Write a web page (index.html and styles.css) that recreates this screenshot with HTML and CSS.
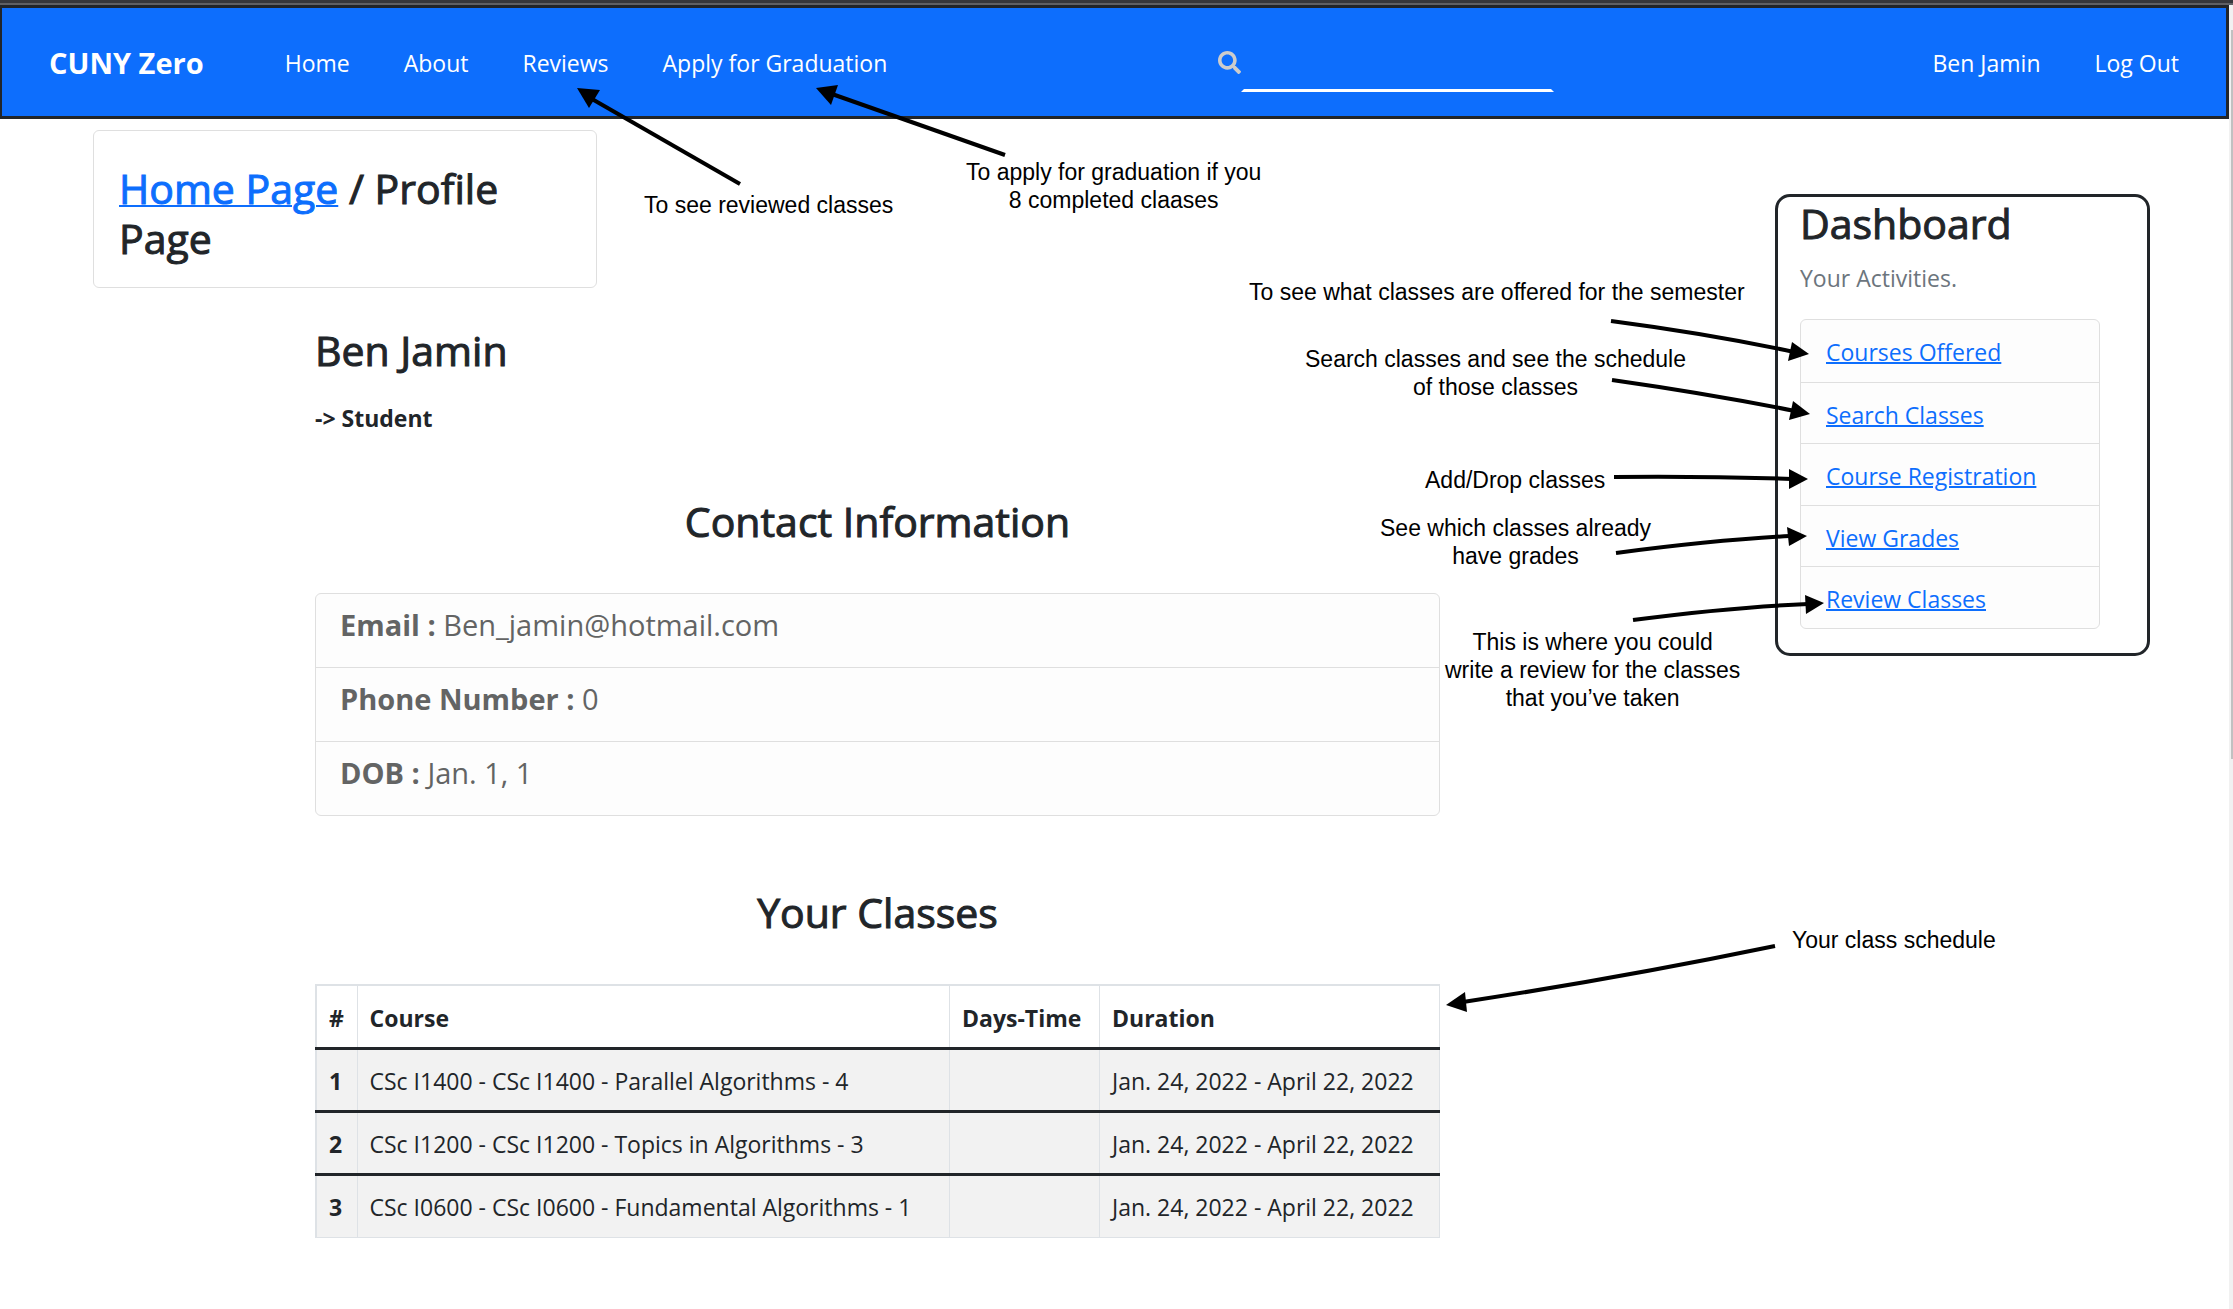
FILE: index.html
```html
<!DOCTYPE html>
<html lang="en">
<head>
  <meta charset="utf-8">
  <meta name="viewport" content="width=device-width, initial-scale=1">
  <title>CUNY Zero - Profile Page</title>
  <link rel="stylesheet" href="styles.css">
</head>
<body>
  <div class="window-edge"></div>
  <div class="viewport">
    <div class="page">
      <header class="navbar">
        <a class="brand" href="#">CUNY Zero</a>
        <nav class="nav-links" aria-label="Main">
          <a href="#">Home</a>
          <a href="#">About</a>
          <a href="#">Reviews</a>
          <a href="#">Apply for Graduation</a>
        </nav>
        <form class="search" role="search">
          <label for="q" aria-label="Search">
            <svg class="search-icon" viewBox="0 0 512 512" aria-hidden="true"><path d="M505 442.700L405.300 343c-4.500-4.500-10.600-7-17-7H372c27.600-35.300 44-79.700 44-128C416 93.100 322.900 0 208 0S0 93.100 0 208s93.100 208 208 208c48.300 0 92.700-16.400 128-44v16.300c0 6.400 2.500 12.500 7 17l99.700 99.700c9.400 9.400 24.600 9.400 33.900 0l28.300-28.300c9.400-9.400 9.400-24.600.1-34zM208 336c-70.700 0-128-57.200-128-128 0-70.700 57.200-128 128-128 70.700 0 128 57.200 128 128 0 70.700-57.200 128-128 128z"/></svg>
          </label>
          <input id="q" type="text" name="q">
        </form>
        <nav class="nav-links nav-account" aria-label="Account">
          <a href="#">Ben Jamin</a>
          <a href="#">Log Out</a>
        </nav>
      </header>

      <main class="layout">
        <div class="breadcrumb">
          <h2><a href="#">Home Page</a> / Profile Page</h2>
        </div>

        <section class="profile">
          <h2>Ben Jamin</h2>
          <p class="role">-&gt; Student</p>

          <h2 class="section-title">Contact Information</h2>
          <ul class="contact">
            <li><b>Email :</b> Ben_jamin@hotmail.com</li>
            <li><b>Phone Number :</b> 0</li>
            <li><b>DOB :</b> Jan. 1, 1</li>
          </ul>

          <h2 class="section-title classes-title">Your Classes</h2>
          <table class="classes">
            <colgroup><col class="col-num"><col><col class="col-days"><col class="col-duration"></colgroup>
            <thead>
              <tr><th scope="col">#</th><th scope="col">Course</th><th scope="col">Days-Time</th><th scope="col">Duration</th></tr>
            </thead>
            <tbody>
              <tr><th scope="row">1</th><td>CSc I1400 - CSc I1400 - Parallel Algorithms - 4</td><td></td><td>Jan. 24, 2022 - April 22, 2022</td></tr>
              <tr><th scope="row">2</th><td>CSc I1200 - CSc I1200 - Topics in Algorithms - 3</td><td></td><td>Jan. 24, 2022 - April 22, 2022</td></tr>
              <tr><th scope="row">3</th><td>CSc I0600 - CSc I0600 - Fundamental Algorithms - 1</td><td></td><td>Jan. 24, 2022 - April 22, 2022</td></tr>
            </tbody>
          </table>
        </section>

        <aside class="dashboard">
          <h2>Dashboard</h2>
          <p>Your Activities.</p>
          <ul class="activities">
            <li><a href="#">Courses Offered</a></li>
            <li><a href="#">Search Classes</a></li>
            <li><a href="#">Course Registration</a></li>
            <li><a href="#">View Grades</a></li>
            <li><a href="#">Review Classes</a></li>
          </ul>
        </aside>
      </main>
    </div>
    <div class="scrollbar" aria-hidden="true"><div class="scroll-thumb"></div></div>
  </div>

  <!-- Notes and arrows drawn over the page -->
  <div class="notes">
    <svg class="arrows" aria-hidden="true">
      <g class="shafts">
        <path d="M740 184L592 99"/>
        <path d="M1005 155L832 94"/>
        <path d="M1611 321Q1710 334 1794 352"/>
        <path d="M1612 380Q1710 394 1795 411"/>
        <path d="M1614 477Q1702 476 1792 479"/>
        <path d="M1616 553Q1714 540 1790 536"/>
        <path d="M1633 620Q1732 607 1808 604"/>
        <path d="M1775 946Q1620 978 1463 1002"/>
      </g>
      <g class="heads">
        <path d="M577 88L600 90L589 108Z"/>
        <path d="M816 88L838 85L831 105Z"/>
        <path d="M1809 354L1792 342L1788 361Z"/>
        <path d="M1810 414L1793 401L1789 420Z"/>
        <path d="M1808 479L1789 469V489Z"/>
        <path d="M1807 536L1787 527L1789 546Z"/>
        <path d="M1824 603L1805 595L1806 614Z"/>
        <path d="M1446 1005L1465 992L1467 1012Z"/>
      </g>
    </svg>
    <p class="note note-reviews">To see reviewed classes</p>
    <p class="note note-graduation">To apply for graduation if you<br>8 completed claases</p>
    <p class="note note-offered">To see what classes are offered for the semester</p>
    <p class="note note-search">Search classes and see the schedule<br>of those classes</p>
    <p class="note note-register">Add/Drop classes</p>
    <p class="note note-grades">See which classes already<br>have grades</p>
    <p class="note note-write">This is where you could<br>write a review for the classes<br>that you’ve taken</p>
    <p class="note note-schedule">Your class schedule</p>
  </div>
</body>
</html>
```
FILE: styles.css
```css
* {
  box-sizing: border-box;
}

body {
  position: relative;
  display: flex;
  flex-direction: column;
  min-height: 100vh;
  margin: 0;
  background: #fff;
  color: #212529;
  font: 400 23px/36px "Open Sans", "Noto Sans", sans-serif;
}

h2 {
  margin: 0;
  font-size: 41px;
  font-weight: 500;
  line-height: 50px;
  -webkit-text-stroke: 1px currentColor;
}

p,
ul {
  margin: 0;
  padding: 0;
}

ul {
  list-style: none;
}

a {
  color: #0d6efd;
  text-decoration-thickness: 2px;
}

.window-edge {
  height: 5px;
  background: #36373b;
  border-bottom: 2px solid #5f6064;
}

.viewport {
  display: flex;
  flex: 1;
}

.page {
  flex: 1;
  min-width: 0;
}

.scrollbar {
  width: 4px;
  padding: 25px 0 0 2px;
  background: #f1f1f1;
}

.scroll-thumb {
  height: 57%;
  background: #c1c1c1;
}

/* Navigation bar */
.navbar {
  display: flex;
  align-items: center;
  padding: 24px 47px;
  background: #0d6efd;
  border: 3px solid #212529;
  border-left-width: 2px;
}

.navbar a {
  padding-top: 2px;
  color: #fff;
  text-decoration: none;
  white-space: nowrap;
}

.navbar .brand {
  font-size: 29px;
  font-weight: 700;
}

.nav-links {
  display: flex;
  gap: 54px;
  margin-left: 81px;
}

.nav-account {
  margin-left: auto;
}

.search {
  display: flex;
  align-items: center;
  margin-left: calc(15vw - 4px);
}

.search label {
  display: flex;
}

.search-icon {
  width: 23px;
  height: 23px;
  fill: #ccc;
}

.search input {
  width: 313px;
  height: 60px;
  padding: 0 12px;
  border: 3px solid transparent;
  border-bottom-color: #fff;
  background: none;
  color: #fff;
  font: inherit;
  outline: none;
}

/* Page columns: margin, profile, gap, dashboard, margin */
.layout {
  display: grid;
  grid-template-columns: 222fr 1125fr 335fr 375fr 79fr;
  grid-template-rows: auto 1fr;
  padding: 11px 0 72px 93px;
}

.breadcrumb {
  grid-column: 1 / 3;
  grid-row: 1;
  max-width: 504px;
  padding: 32px 25px 24px;
  border: 1px solid #dfdfdf;
  border-radius: 6px;
}

.breadcrumb a {
  display: inline-block;
}

.profile {
  grid-column: 2;
  grid-row: 2;
  padding-top: 37px;
}

.role {
  margin: 25px 0 60px;
  font-weight: 700;
}

.section-title {
  margin-bottom: 47px;
  text-align: center;
}

.classes-title {
  margin-top: 71px;
}

.contact,
.activities {
  border: 1px solid #dfdfdf;
  border-radius: 6px;
  background: #fdfdfd;
}

.contact li {
  padding: 13px 24px 24px;
  color: #636464;
  font-size: 29px;
  font-weight: 500;
}

.contact li + li,
.activities li + li {
  border-top: 1px solid #dfdfdf;
}

/* Class schedule */
.classes {
  width: 100%;
  border-collapse: collapse;
  table-layout: fixed;
}

.col-num {
  width: 41px;
}

.col-days {
  width: 150px;
}

.col-duration {
  width: 340px;
}

.classes th,
.classes td {
  height: 63px;
  padding: 12px 12px 10px;
  border: 1px solid #dee2e6;
  text-align: left;
  white-space: nowrap;
}

.classes th {
  font-weight: 700;
}

.classes th:first-child {
  border-left-width: 2px;
}

.classes thead th {
  padding-top: 14px;
  border-top-width: 2px;
}

.classes tbody tr {
  background: #f2f2f2;
}

.classes tbody th,
.classes tbody td {
  border-top: 3px solid #212529;
}

/* Dashboard */
.dashboard {
  grid-column: 4;
  grid-row: 1 / 3;
  align-self: start;
  margin-top: 64px;
  padding: 1px 47px 24px 22px;
  border: 3px solid #212529;
  border-radius: 15px;
}

.dashboard p {
  margin: 12px 0 23px;
  color: #6c757d;
}

.activities {
  display: grid;
  grid-auto-rows: 1fr;
  min-height: 310px;
}

.activities li {
  padding: 14px 25px 10px;
}

/* Annotations */
.notes {
  position: absolute;
  inset: 0;
  overflow: hidden;
  pointer-events: none;
  color: #000;
  font: 23px/28px "Liberation Sans", Arial, sans-serif;
}

.arrows {
  position: absolute;
  width: 100%;
  height: 100%;
}

.shafts {
  fill: none;
  stroke: #000;
  stroke-width: 4px;
}

.note {
  position: absolute;
  text-align: center;
  white-space: nowrap;
}

.note-reviews { left: 644px; top: 191px; }
.note-graduation { left: 966px; top: 158px; }
.note-offered { left: 1249px; top: 278px; }
.note-search { left: 1305px; top: 345px; }
.note-register { left: 1425px; top: 466px; }
.note-grades { left: 1380px; top: 514px; }
.note-write { left: 1445px; top: 628px; }
.note-schedule { left: 1792px; top: 926px; }
```
